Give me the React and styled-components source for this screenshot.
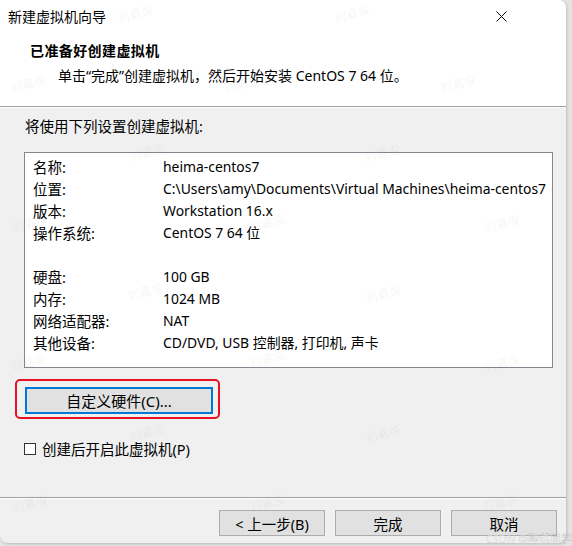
import React from 'react';
import styled, { createGlobalStyle } from 'styled-components';

const GlobalStyle = createGlobalStyle`
    html, body {
        margin: 0;
        padding: 0;
        background: #e4e4e4;
    }
    body {
        font-family: "Noto Sans", "Noto Sans CJK SC", sans-serif;
        color: #000;
    }
`

const Page = styled.div`
    position: relative;
    width: 572px;
    height: 546px;
`

const Window = styled.div`
    position: relative;
    width: 566px;
    height: 543px;
    display: flex;
    flex-direction: column;
    border-radius: 0 8px 8px 8px;
    overflow: hidden;
    background: #f0f0f0;
    box-shadow: 1px 1px 3px rgba(0,0,0,0.18);
`

const Header = styled.div`
    background: #fff;
    height: 106px;
    display: flex;
    flex-direction: column;
`

const TitleBar = styled.div`
    height: 32px;
    display: flex;
    align-items: center;
    justify-content: space-between;
    padding: 0 0 0 8px;
    font-size: 14px;
`

const CloseButton = styled.div`
    width: 46px;
    height: 32px;
    margin-right: 42px;
    display: flex;
    align-items: center;
    justify-content: center;
`

const Heading = styled.div`
    margin: 9px 0 0 30px;
    font-size: 14px;
    font-weight: bold;
    letter-spacing: 0.4px;
    line-height: 20px;
`

const SubHeading = styled.div`
    margin: 5px 0 0 58px;
    font-size: 14px;
    line-height: 20px;
`

const Divider = styled.div`
    height: 1px;
    background: #a0a0a0;
    border-bottom: 1px solid #fff;
`

const Body = styled.div`
    flex: 1;
    display: flex;
    flex-direction: column;
    align-items: flex-start;
    padding: 8px 0 0 24px;
    font-size: 14.5px;
`

const Intro = styled.div`
    margin-left: 1px;
    line-height: 20px;
`

const SummaryBox = styled.div`
    margin-top: 16px;
    width: 529px;
    height: 216px;
    border: 1px solid #828790;
    background: #fff;
    padding: 3px 0 0 8px;
    box-sizing: border-box;
    display: grid;
    grid-template-columns: 130px 1fr;
    grid-auto-rows: 22px;
    align-content: start;
    align-items: center;
`

const Cell = styled.div`
    white-space: nowrap;
    line-height: 22px;
    font-size: ${p => p.$value ? '13.9px' : '14.5px'};
`

const Highlight = styled.div`
    margin: 11px 0 0 -9px;
    border: 2px solid #e81123;
    border-radius: 5px;
    padding: 6px 5px 3px 8px;
`

const Button = styled.div`
    width: ${p => p.$width || 106}px;
    height: ${p => p.$height || 26}px;
    box-sizing: border-box;
    border: ${p => p.$focused ? '2px solid #0078d7' : '1px solid #adadad'};
    background: #e1e1e1;
    display: flex;
    align-items: center;
    justify-content: center;
    font-size: ${p => p.$focused ? '15px' : '14.5px'};
`

const CheckRow = styled.label`
    margin-top: 20px;
    display: flex;
    align-items: center;
    gap: 6px;
    line-height: 20px;
`

const CheckBox = styled.span`
    width: 10px;
    height: 10px;
    border: 1px solid #333;
    background: #fff;
`

const Footer = styled.div`
    display: flex;
    flex-direction: column;
`

const ButtonRow = styled.div`
    display: flex;
    justify-content: flex-end;
    gap: 10px;
    padding: 11px 9px 7px 0;
`

const Watermark = styled.span`
    position: absolute;
    transform: translate(-50%, -50%) rotate(-14deg);
    font-size: 12px;
    color: rgba(0,0,0,0.06);
    pointer-events: none;
    white-space: nowrap;
`

const Credit = styled.span`
    position: absolute;
    right: 0;
    bottom: 1px;
    font-size: 11px;
    line-height: 13px;
    color: rgba(255,255,255,0.75);
    -webkit-text-stroke: 0.4px rgba(0,0,0,0.2);
    pointer-events: none;
`

const rows = [
    ['名称:', 'heima-centos7'],
    ['位置:', 'C:\\Users\\amy\\Documents\\Virtual Machines\\heima-centos7'],
    ['版本:', 'Workstation 16.x'],
    ['操作系统:', 'CentOS 7 64 位'],
    ['', ''],
    ['硬盘:', '100 GB'],
    ['内存:', '1024 MB'],
    ['网络适配器:', 'NAT'],
    ['其他设备:', 'CD/DVD, USB 控制器, 打印机, 声卡'],
]

const marks = [
    [135, 13], [352, 13],
    [28, 83], [242, 83], [458, 83],
    [147, 152], [382, 153],
    [30, 223], [267, 222], [502, 223],
    [145, 291], [383, 293],
    [28, 362], [267, 358], [502, 363],
    [147, 432], [383, 433],
    [30, 503], [267, 502], [500, 502],
]

export default function App() {
    return (
        <Page>
            <GlobalStyle />
            <Window>
                <Header>
                    <TitleBar>
                        <span>新建虚拟机向导</span>
                        <CloseButton>
                            <svg width="11" height="11" viewBox="0 0 11 11">
                                <path d="M0.5 0.5 L10.5 10.5 M10.5 0.5 L0.5 10.5" stroke="#000" strokeWidth="1" />
                            </svg>
                        </CloseButton>
                    </TitleBar>
                    <Heading>已准备好创建虚拟机</Heading>
                    <SubHeading>单击“完成”创建虚拟机，然后开始安装 CentOS 7 64 位。</SubHeading>
                </Header>
                <Divider />
                <Body>
                    <Intro>将使用下列设置创建虚拟机:</Intro>
                    <SummaryBox>
                        {rows.map(([k, v], i) => (
                            <React.Fragment key={i}>
                                <Cell>{k}</Cell>
                                <Cell $value>{v}</Cell>
                            </React.Fragment>
                        ))}
                    </SummaryBox>
                    <Highlight>
                        <Button $width={188} $height={27} $focused>自定义硬件(C)...</Button>
                    </Highlight>
                    <CheckRow>
                        <CheckBox />
                        创建后开启此虚拟机(P)
                    </CheckRow>
                </Body>
                <Footer>
                    <Divider />
                    <ButtonRow>
                        <Button>&lt; 上一步(B)</Button>
                        <Button>完成</Button>
                        <Button>取消</Button>
                    </ButtonRow>
                </Footer>
                {marks.map(([x, y], i) => (
                    <Watermark key={i} style={{ left: x, top: y }}>刘嘉俊</Watermark>
                ))}
            </Window>
            <Credit>CSDN @陶然同学</Credit>
        </Page>
    )
}
